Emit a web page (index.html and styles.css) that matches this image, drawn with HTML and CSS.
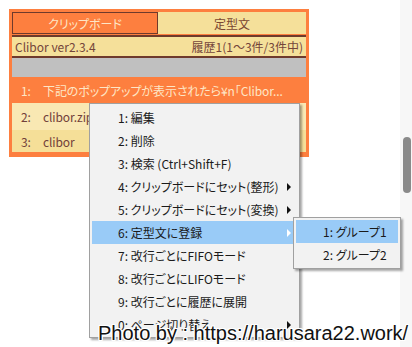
FILE: index.html
```html
<!DOCTYPE html>
<html lang="ja">
<head>
    <meta charset="UTF-8">
    <meta name="viewport" content="width=device-width, initial-scale=1.0">
    <title>Clibor</title>
    <link rel="stylesheet" href="styles.css">
</head>
<body>
    <div class="screen">
        <!-- Clibor window -->
        <div class="clibor">
            <div class="tabs">
                <div class="tab active">クリップボード</div>
                <div class="tab">定型文</div>
            </div>
            <div class="info">
                <span>Clibor ver2.3.4</span>
                <span>履歴1(1〜3件/3件中)</span>
            </div>
            <div class="search"></div>
            <ul class="list">
                <li class="selected"><span class="no">1:</span>下記のポップアップが表示されたら¥n「Clibor...</li>
                <li class="odd"><span class="no">2:</span>clibor.zip</li>
                <li class="even"><span class="no">3:</span>clibor</li>
            </ul>
        </div>

        <!-- Scrollbar -->
        <div class="scrollbar"><div class="thumb"></div></div>

        <!-- Context menu -->
        <ul class="menu">
            <li>1: 編集</li>
            <li>2: 削除</li>
            <li>3: 検索 (Ctrl+Shift+F)</li>
            <li class="sub">4: クリップボードにセット(整形)</li>
            <li class="sub">5: クリップボードにセット(変換)</li>
            <li class="sub active">6: 定型文に登録</li>
            <li>7: 改行ごとにFIFOモード</li>
            <li>8: 改行ごとにLIFOモード</li>
            <li>9: 改行ごとに履歴に展開</li>
            <li class="sub">0: ページ切り替え</li>
        </ul>

        <ul class="submenu">
            <li class="active">1: グループ1</li>
            <li>2: グループ2</li>
        </ul>

        <div class="credit">Photo by : https://harusara22.work/</div>
    </div>
</body>
</html>
```

FILE: styles.css
```css
/* General */
body {
    margin: 0;
    background: #fff;
    font-family: "Noto Sans CJK JP", "Noto Sans", sans-serif;
    font-feature-settings: "palt";
}
.screen {
    position: relative;
    width: 412px;
    height: 347px;
    overflow: hidden;
}

/* Clibor window */
.clibor {
    margin: 9px 0 0 9px;
    width: 294px;
    border: 3px solid #fd7f3f;
    border-bottom-width: 5px;
    background: #fd7f3f;
}
.tabs {
    display: flex;
    height: 23px;
}
.tab {
    flex: 1;
    height: 22px;
    display: flex;
    align-items: center;
    justify-content: center;
    font-size: 12px;
    color: #7a4632;
    background: #f5e09a;
}
.tab.active {
    flex: 0 0 144px;
    height: 20px;
    border: 1px solid #6e3a2c;
    background: #fd7f3f;
    color: #fde6c6;
}
.info {
    display: flex;
    justify-content: space-between;
    align-items: center;
    height: 19px;
    padding: 0 3px;
    border-top: 2px solid #6e3a2c;
    border-bottom: 2px solid #6e3a2c;
    background: #f5e09a;
    font-size: 12px;
    color: #74453a;
}
.search {
    height: 19px;
    background: #c0c0c0;
}
.list {
    list-style: none;
    margin: 0;
    padding: 0;
}
.list li {
    height: 26px;
    display: flex;
    align-items: center;
    padding-left: 9px;
    font-size: 12px;
    letter-spacing: -0.1px;
    color: #72403a;
    white-space: nowrap;
    overflow: hidden;
}
.list .no {
    width: 22px;
}
.list li.selected {
    color: #fde6c6;
    background: #fd7f3f;
}
.list li.odd {
    height: 27px;
    background: #f9e8b3;
}
.list li.even {
    height: 22px;
    background: #f5df98;
}

/* Scrollbar */
.scrollbar {
    position: absolute;
    top: 0;
    right: 0;
    width: 12px;
    height: 347px;
    background: #f7f7f7;
}
.thumb {
    position: absolute;
    top: 137px;
    left: 3px;
    width: 8px;
    height: 56px;
    border-radius: 4px;
    background: #8a8a8a;
}

/* Context menus */
.menu, .submenu {
    position: absolute;
    list-style: none;
    margin: 0;
    padding: 2px;
    border: 1px solid #a0a0a0;
    background: #f2f2f2;
    box-shadow: 2px 2px 2px rgba(0, 0, 0, 0.35);
    font-size: 12px;
    color: #1a1a1a;
}
.menu {
    left: 89px;
    top: 103px;
    width: 204px;
    padding: 2px 3px 1px 2px;
}
.menu li {
    position: relative;
    height: 23px;
    line-height: 23px;
    padding-left: 26px;
    white-space: nowrap;
}
.menu li.sub::after {
    content: "";
    position: absolute;
    right: 5px;
    top: 8px;
    border-left: 4px solid #111;
    border-top: 4px solid transparent;
    border-bottom: 4px solid transparent;
}
.menu li.active {
    background: #99cbf7;
}
.menu li.active::after {
    border-left-color: #fff;
}
.submenu {
    left: 293px;
    top: 217px;
    width: 102px;
}
.submenu li {
    height: 23px;
    line-height: 23px;
    padding-left: 27px;
}
.submenu li.active {
    background: #99cbf7;
}

/* Watermark */
.credit {
    position: absolute;
    left: 98px;
    top: 322px;
    font-family: "Liberation Sans", Arial, sans-serif;
    font-size: 20px;
    color: #111;
    white-space: nowrap;
    text-shadow: 1px 0 #fff, -1px 0 #fff, 0 1px #fff, 0 -1px #fff,
        1px 1px #fff, -1px -1px #fff, 1px -1px #fff, -1px 1px #fff;
}
```
